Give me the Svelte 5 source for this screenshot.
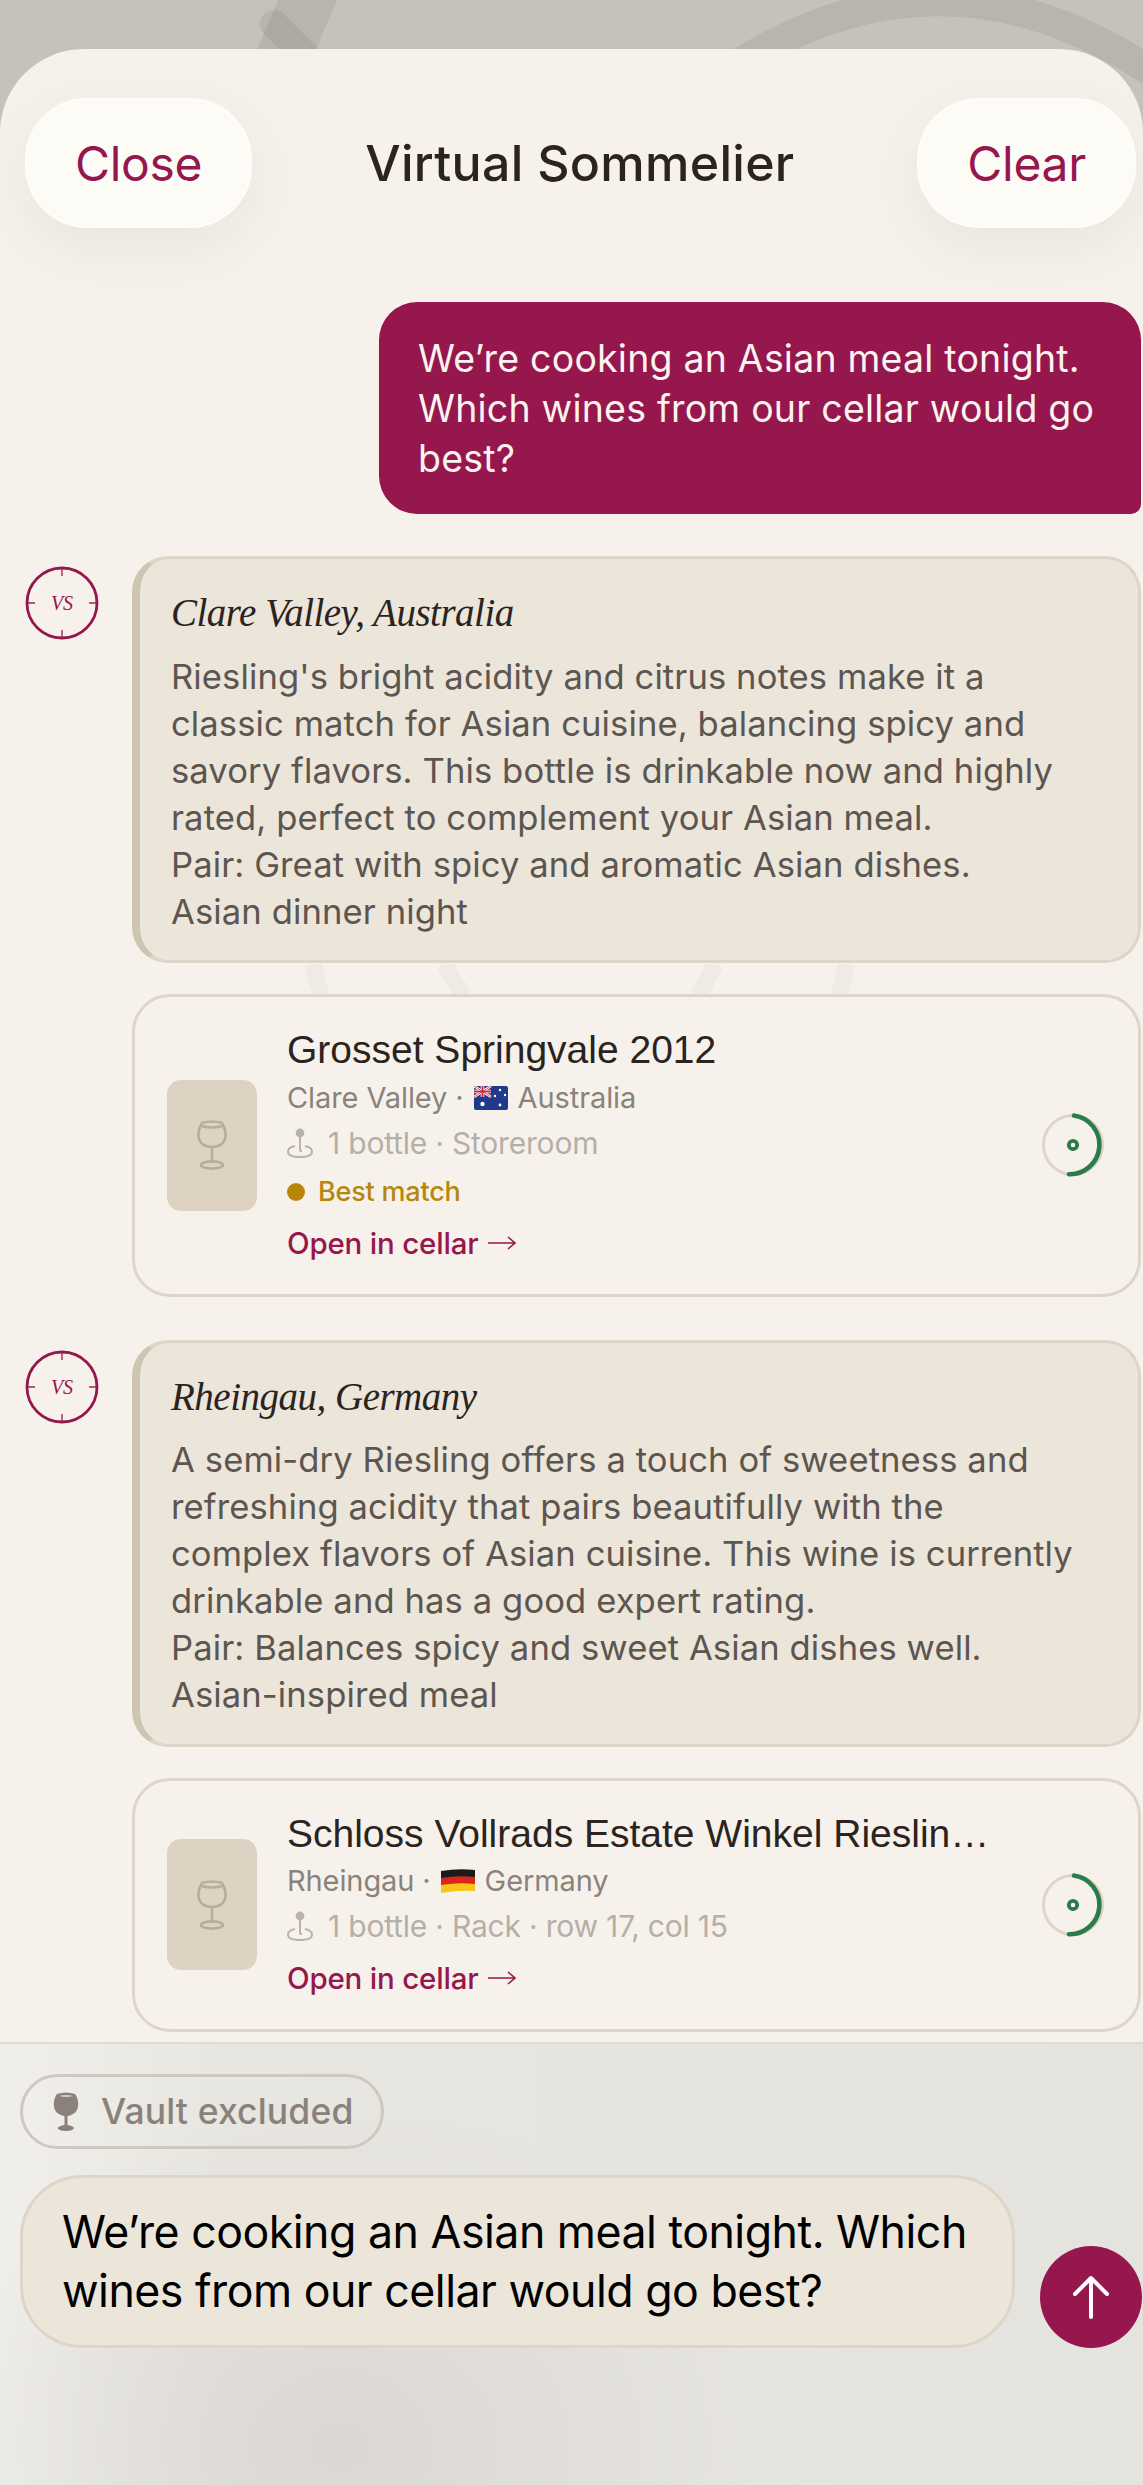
<script>
	const wines = [
		{
			heading: 'Clare Valley, Australia',
			note: [
				"Riesling's bright acidity and citrus notes make it a",
				'classic match for Asian cuisine, balancing spicy and',
				'savory flavors. This bottle is drinkable now and highly',
				'rated, perfect to complement your Asian meal.',
				'Pair: Great with spicy and aromatic Asian dishes.',
				'Asian dinner night'
			],
			name: 'Grosset Springvale 2012',
			region: 'Clare Valley',
			flag: 'au',
			country: 'Australia',
			place: '1 bottle · Storeroom',
			best: true
		},
		{
			heading: 'Rheingau, Germany',
			note: [
				'A semi-dry Riesling offers a touch of sweetness and',
				'refreshing acidity that pairs beautifully with the',
				'complex flavors of Asian cuisine. This wine is currently',
				'drinkable and has a good expert rating.',
				'Pair: Balances spicy and sweet Asian dishes well.',
				'Asian-inspired meal'
			],
			name: 'Schloss Vollrads Estate Winkel Riesling Kabinett',
			region: 'Rheingau',
			flag: 'de',
			country: 'Germany',
			place: '1 bottle · Rack · row 17, col 15',
			best: false
		}
	];
</script>

<div class="screen">
	<svg class="backdrop" viewBox="0 0 1143 120" aria-hidden="true">
		<path d="M312 -10L282 60" stroke-width="54" />
		<path d="M274 24L340 90" stroke-width="28" stroke-linecap="round" />
		<path d="M700 90Q935 -85 1170 85" stroke-width="30" />
	</svg>

	<div class="sheet">
		<svg class="glass" viewBox="0 0 1143 60" aria-hidden="true">
			<path d="M313 0Q316 16 322 32M445 0Q452 16 465 32M715 0Q708 16 698 32M847 0Q843 16 839 32" />
		</svg>

		<header>
			<button class="pill-btn">Close</button>
			<h1>Virtual Sommelier</h1>
			<button class="pill-btn">Clear</button>
		</header>

		<main>
			<div class="user-msg">
				We’re cooking an Asian meal tonight.<br />Which wines from our cellar would go<br />best?
			</div>

			{#each wines as wine}
				<section class="reply">
					<svg class="avatar" width="74" height="74" viewBox="0 0 74 74">
						<circle cx="37" cy="37" r="35" fill="none" stroke="#96164e" stroke-width="2.8" />
						<path d="M37 1v9M37 64v9M1 37h9M64 37h9" stroke="#96164e" stroke-width="1.8" opacity="0.7" />
						<text x="37" y="44" text-anchor="middle">VS</text>
					</svg>
					<div class="bubble">
						<h2>{wine.heading}</h2>
						<p>
							{#each wine.note as line}
								<span>{line}</span>
							{/each}
						</p>
					</div>
				</section>

				<article class="card">
					<div class="thumb">
						<svg width="32" height="50" viewBox="0 0 32 50" fill="none" stroke="#b6ad9f" stroke-width="2.6">
							<path d="M6 3C1 11 1 21 8 25Q16 29 24 25C31 21 31 11 26 3Q16 0 6 3Z" />
							<path d="M6 6Q16 9 26 6M16 27V43" />
							<ellipse cx="16" cy="45" rx="11" ry="3.6" />
						</svg>
					</div>
					<div class="info">
						<div class="name">{wine.name}</div>
						<div class="region">
							{wine.region} ·
							{#if wine.flag === 'au'}
								<svg class="flag" width="34" height="24" viewBox="0 0 34 24">
									<rect width="34" height="24" rx="2" fill="#1f3a8a" />
									<path d="M0 0L17 11M17 0L0 11" stroke="#fff" stroke-width="2.6" />
									<path d="M8.5 0V11M0 5.5H17" stroke="#fff" stroke-width="3.6" />
									<path d="M8.5 0V11M0 5.5H17" stroke="#d8283c" stroke-width="2" />
									<path d="M0 0L17 11M17 0L0 11" stroke="#d8283c" stroke-width="0.8" />
									<circle cx="8.5" cy="18" r="2.2" fill="#fff" />
									<circle cx="26" cy="4" r="1.2" fill="#fff" />
									<circle cx="21" cy="10" r="1.2" fill="#fff" />
									<circle cx="31" cy="9" r="1.2" fill="#fff" />
									<circle cx="26" cy="19" r="1.4" fill="#fff" />
								</svg>
							{:else}
								<svg class="flag" width="34" height="24" viewBox="0 0 34 24">
									<path d="M0 2Q17 -1 34 1V9Q17 7 0 10Z" fill="#1b1b1b" />
									<path d="M0 9Q17 6 34 8V16Q17 14 0 17Z" fill="#d9261c" />
									<path d="M0 16Q17 13 34 15V22Q17 21 0 24Z" fill="#f5c518" />
								</svg>
							{/if}
							{wine.country}
						</div>
						<div class="place">
							<svg width="26" height="30" viewBox="0 0 26 30" fill="none" stroke="#b8b2a9" stroke-width="2">
								<circle cx="13" cy="5" r="3.4" fill="#b8b2a9" />
								<path d="M13 8V22Q13 23 15 23" />
								<path d="M8 18C3 19 1 21 1 23.5C1 27 6 29 13 29C20 29 25 27 25 23.5C25 21 23 19 18 18" />
							</svg>
							{wine.place}
						</div>
						{#if wine.best}
							<div class="best"><i></i>Best match</div>
						{/if}
						<div class="open">
							Open in cellar
							<svg width="28" height="14" viewBox="0 0 28 14" fill="none" stroke="#96164e" stroke-width="1.5">
								<path d="M0 7H27M20 1L27 7L20 13" />
							</svg>
						</div>
					</div>
					<svg class="ring" width="64" height="64" viewBox="0 0 64 64" fill="none">
						<circle cx="32" cy="32" r="29.5" stroke="#ded5c8" stroke-width="3" />
						<path d="M33 2.5A29.5 29.5 0 0 1 28 61.2" stroke="#2a7d4b" stroke-width="4.6" stroke-linecap="round" />
						<circle cx="32" cy="32" r="4.2" stroke="#2a7d4b" stroke-width="3.8" />
					</svg>
				</article>
			{/each}
		</main>

		<footer>
			<div class="vault">
				<svg width="26" height="40" viewBox="0 0 26 40">
					<path d="M4 2Q13 -1 22 2C27 9 26 19 20 22Q17 24 14.5 24V33Q20 34 21 36Q20 39 13 39Q6 39 4.5 36Q6 34 11.5 33V24Q9 24 6 22C0 19 -1 9 4 2Z" fill="#8a827a" />
					<path d="M6 4Q13 2 20 4Q13 6 6 4Z" fill="#d6d2cb" />
				</svg>
				Vault excluded
			</div>
			<div class="compose">
				<div class="input">
					We’re cooking an Asian meal tonight. Which<br />wines from our cellar would go best?
				</div>
				<button class="send" aria-label="Send">
					<svg width="38" height="44" viewBox="0 0 38 44" fill="none" stroke="#fff" stroke-width="4" stroke-linecap="round" stroke-linejoin="round">
						<path d="M19 42V3M3 19L19 3L35 19" />
					</svg>
				</button>
			</div>
		</footer>
	</div>
</div>

<style>
	:global(body) {
		margin: 0;
		background: #c5c2bb;
	}

	.screen {
		position: relative;
		height: 2485px;
		padding-top: 49px;
		box-sizing: border-box;
		overflow: hidden;
		font-family: Inter, 'Liberation Sans', sans-serif;
	}

	.backdrop {
		position: absolute;
		top: 0;
		left: 0;
		width: 1143px;
		height: 120px;
		fill: none;
		stroke: #3c3a30;
		stroke-opacity: 0.09;
	}

	.sheet {
		position: relative;
		height: 2436px;
		display: flex;
		flex-direction: column;
		border-radius: 84px 84px 0 0;
		background: #f6f2eb;
		overflow: hidden;
	}

	.glass {
		position: absolute;
		top: 915px;
		left: 0;
		width: 1143px;
		height: 60px;
		fill: none;
		stroke: #efebe4;
		stroke-width: 17;
	}

	header {
		display: flex;
		align-items: center;
		justify-content: space-between;
		padding: 49px 7px 0 25px;
		height: 130px;
		flex: none;
	}

	h1 {
		margin: 0 10px 0 0;
		font-size: 50px;
		font-weight: 500;
		letter-spacing: 0.3px;
		color: #2a2320;
	}

	.pill-btn {
		height: 130px;
		padding: 0 48px;
		border: 2px solid #fffdf9;
		border-radius: 62px;
		background: #fdfbf6;
		color: #96164e;
		font: 400 48px Inter, 'Liberation Sans', sans-serif;
		letter-spacing: -0.3px;
		box-shadow: 0 18px 60px rgba(70, 50, 40, 0.07);
	}

	main {
		position: relative;
		flex: 1;
		min-height: 0;
		display: flex;
		flex-direction: column;
		padding: 74px 2px 0 25px;
		border-bottom: 2px solid #e2dcd0;
	}

	.user-msg {
		align-self: flex-end;
		width: 762px;
		height: 213px;
		padding: 32px 10px 0 39px;
		box-sizing: border-box;
		border-radius: 38px 38px 10px 38px;
		background: #96164e;
		color: #fbf3ee;
		font-size: 37.5px;
		line-height: 50px;
		letter-spacing: 0.2px;
		margin-bottom: 42px;
	}

	.reply {
		display: flex;
		align-items: flex-start;
		gap: 33px;
		margin-bottom: 31px;
	}

	.avatar {
		flex: none;
		margin-top: 10px;
	}

	.avatar text {
		font: italic 20px 'Liberation Serif', serif;
		fill: #96164e;
	}

	.bubble {
		flex: 1;
		height: 407px;
		padding: 28px 10px 0 31px;
		box-sizing: border-box;
		background: #ece5da;
		border: 3px solid #ddd5c8;
		border-left: 8px solid #cfc4b2;
		border-radius: 36px;
		color: #5c5550;
		font-size: 34.6px;
		line-height: 47px;
		letter-spacing: 0.1px;
	}

	h2 {
		margin: 0 0 13.5px;
		font: italic 400 39px/52px 'Liberation Serif', serif;
		color: #2a2320;
		letter-spacing: -0.5px;
	}

	.bubble p {
		margin: 0;
	}

	.bubble span {
		display: block;
	}

	.card {
		display: flex;
		align-items: center;
		margin-bottom: 43px;
		margin-left: 107px;
		padding: 0 33px 0 32px;
		box-sizing: border-box;
		border: 3px solid #ddd5c8;
		border-radius: 38px;
		background: #f6f2eb;
	}

	.card:last-child {
		margin-bottom: 10px;
	}

	.thumb {
		flex: none;
		width: 90px;
		height: 131px;
		display: flex;
		align-items: center;
		justify-content: center;
		border-radius: 14px;
		background: #ded3c3;
		margin-right: 30px;
	}

	.info {
		flex: 1;
		min-width: 0;
		padding: 29px 0 26px;
		margin-right: 50px;
	}

	.name {
		font: 400 39px/48px 'Liberation Sans', sans-serif;
		color: #2a2320;
		white-space: nowrap;
		overflow: hidden;
		text-overflow: ellipsis;
	}

	.region {
		display: flex;
		align-items: center;
		gap: 10px;
		margin-top: 1.5px;
		font-size: 29px;
		line-height: 44px;
		letter-spacing: -0.1px;
		color: #8a837b;
	}

	.place {
		display: flex;
		align-items: center;
		gap: 15px;
		font-size: 30px;
		line-height: 46px;
		letter-spacing: -0.2px;
		color: #b5afa7;
	}

	.best {
		display: flex;
		align-items: center;
		gap: 13px;
		margin-top: 4px;
		font-size: 27px;
		line-height: 44px;
		font-weight: 500;
		letter-spacing: -0.2px;
		color: #b8860b;
	}

	.best i {
		width: 18px;
		height: 18px;
		border-radius: 50%;
		background: #b8860b;
	}

	.open {
		display: flex;
		align-items: center;
		gap: 10px;
		margin-top: 4px;
		font-size: 29.5px;
		line-height: 50px;
		font-weight: 500;
		letter-spacing: -0.2px;
		color: #96164e;
	}

	.ring {
		flex: none;
	}

	footer {
		flex: none;
		height: 441px;
		padding: 30px 1px 0 20px;
		box-sizing: border-box;
		background:
			radial-gradient(ellipse 420px 340px at 340px 400px, #dbd8d3, transparent),
			linear-gradient(90deg, #f0efeb, #e8e6e0 20%, #e5e3dd);
	}

	.vault {
		display: inline-flex;
		align-items: center;
		gap: 22px;
		height: 75px;
		padding: 0 27px 0 30px;
		box-sizing: border-box;
		border: 3px solid #cdc9c2;
		border-radius: 38px;
		font-size: 35.5px;
		font-weight: 500;
		letter-spacing: 0.15px;
		color: #8a827a;
	}

	.compose {
		display: flex;
		align-items: flex-end;
		gap: 25px;
		margin-top: 26px;
	}

	.input {
		flex: 1;
		height: 173px;
		padding: 25px 0 0 39px;
		box-sizing: border-box;
		background: #ece5da;
		border: 3px solid #ddd5c8;
		border-radius: 62px;
		color: #000;
		font-size: 44.7px;
		line-height: 59px;
		letter-spacing: -0.5px;
	}

	.send {
		flex: none;
		width: 102px;
		height: 102px;
		padding: 0;
		border: 0;
		border-radius: 50%;
		background: #96164e;
		display: flex;
		align-items: center;
		justify-content: center;
	}
</style>
